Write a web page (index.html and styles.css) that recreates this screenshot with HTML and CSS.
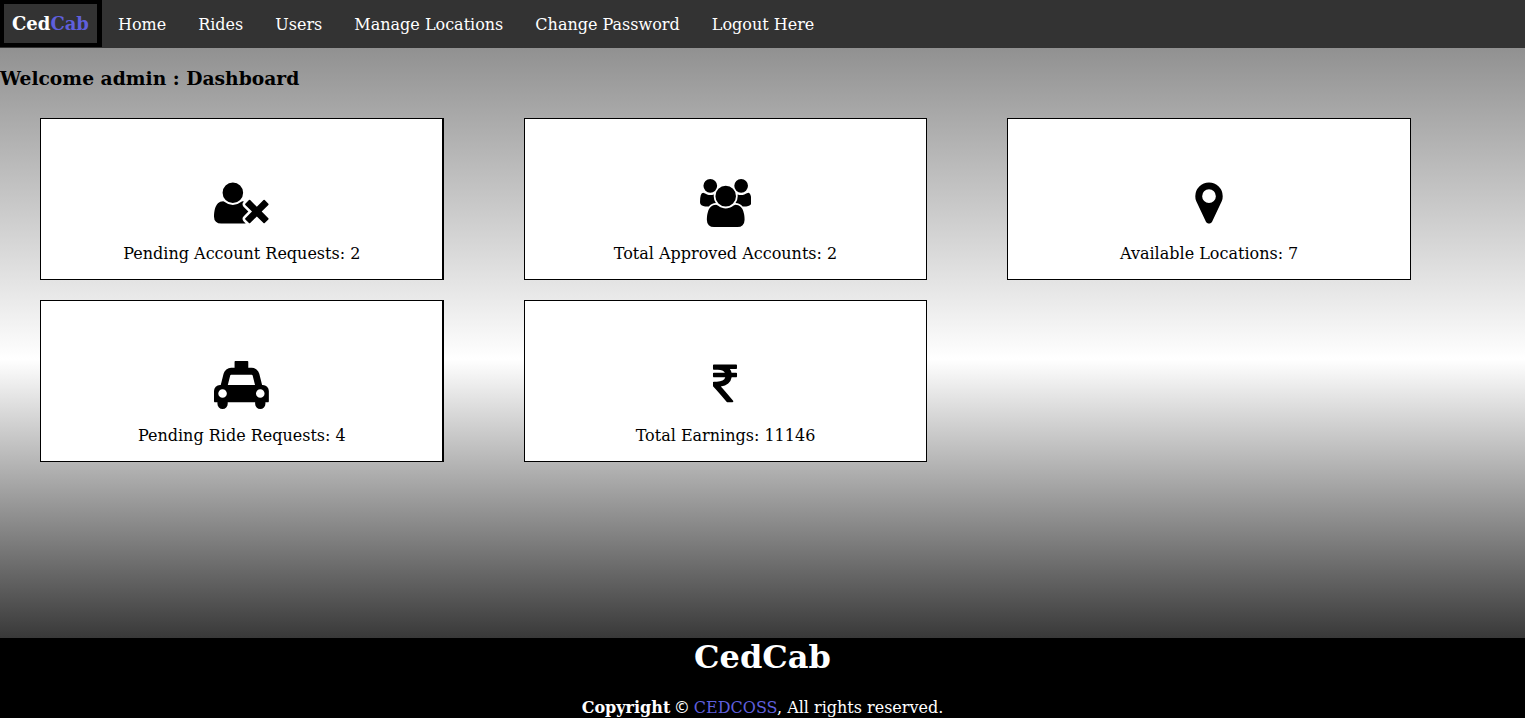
FILE: index.html
```html
<!DOCTYPE html>
<html lang="en">
<head>
<meta charset="utf-8">
<title>CedCab Dashboard</title>
<link rel="stylesheet" href="styles.css">
</head>
<body>
<header class="navbar">
  <a class="logo" href="#">Ced<span class="accent">Cab</span></a>
  <nav class="links">
    <a href="#">Home</a>
    <a href="#">Rides</a>
    <a href="#">Users</a>
    <a href="#">Manage Locations</a>
    <a href="#">Change Password</a>
    <a href="#">Logout Here</a>
  </nav>
</header>
<main class="content">
  <h3 class="welcome">Welcome admin : Dashboard</h3>
  <div class="cards">
    <section class="card">
      <svg class="icon" viewBox="0 0 2048 1792" aria-hidden="true"><path d="M704 896q-159 0-271.500-112.500t-112.500-271.500 112.500-271.500 271.500-112.500 271.500 112.500 112.500 271.500-112.500 271.500-271.500 112.500zm1077 320l249 249q9 9 9 23 0 13-9 22l-136 136q-9 9-22 9-14 0-23-9l-249-249-249 249q-9 9-23 9-13 0-22-9l-136-136q-9-9-9-22 0-14 9-23l249-249-249-249q-9-9-9-23 0-13 9-22l136-136q9-9 22-9 14 0 23 9l249 249 249-249q9-9 23-9 13 0 22 9l136 136q9 9 9 22 0 14-9 23zm-498 0l-181 181q-37 37-37 91 0 53 37 90l83 83q-21 3-44 3h-874q-121 0-194-69t-73-190q0-53 3.500-103.500t14-109 26.500-108.500 43-97.500 62-81 85.500-53.500 111.500-20q19 0 39 17 154 122 319 122t319-122q20-17 39-17 28 0 57 6-28 27-41 50t-13 56q0 54 37 91z"/></svg>
      <p class="stat">Pending Account Requests: 2</p>
    </section>
    <section class="card">
      <svg class="icon" viewBox="0 0 1920 1792" aria-hidden="true"><path d="M593 896q-162 5-265 128h-134q-82 0-138-40.500t-56-118.500q0-353 124-353 6 0 43.500 21t97.500 42.500 119 21.500q67 0 133-23-5 37-5 66 0 139 81 256zm1071 637q0 120-73 189.500t-194 69.500h-874q-121 0-194-69.500t-73-189.500q0-53 3.500-103.500t14-109 26.500-108.500 43-97.500 62-81 85.500-53.500 111.500-20q10 0 43 21.500t73 48 107 48 135 21.500 135-21.500 107-48 73-48 43-21.500q61 0 111.500 20t85.500 53.500 62 81 43 97.500 26.500 108.500 14 109 3.500 103.500zm-1024-1277q0 106-75 181t-181 75-181-75-75-181 75-181 181-75 181 75 75 181zm704 384q0 159-112.500 271.500t-271.500 112.500-271.500-112.500-112.500-271.500 112.500-271.500 271.500-112.500 271.500 112.500 112.500 271.500zm576 225q0 78-56 118.500t-138 40.500h-134q-103-123-265-128 81-117 81-256 0-29-5-66 66 23 133 23 59 0 119-21.500t97.500-42.500 43.500-21q124 0 124 353zm-128-609q0 106-75 181t-181 75-181-75-75-181 75-181 181-75 181 75 75 181z"/></svg>
      <p class="stat">Total Approved Accounts: 2</p>
    </section>
    <section class="card">
      <svg class="icon" viewBox="0 0 1792 1792" aria-hidden="true"><path d="M1152 640q0-106-75-181t-181-75-181 75-75 181 75 181 181 75 181-75 75-181zm256 0q0 109-33 179l-364 774q-16 33-47.500 52t-67.500 19-67.500-19-46.500-52l-365-774q-33-70-33-179 0-212 150-362t362-150 362 150 150 362z"/></svg>
      <p class="stat">Available Locations: 7</p>
    </section>
    <section class="card">
      <svg class="icon" viewBox="0 -128 2048 1792" aria-hidden="true"><path d="M480 1088q0-66-47-113t-113-47-113 47-47 113 47 113 113 47 113-47 47-113zm36-320h1016l-89-357q-2-8-14-17.500t-21-9.500h-768q-9 0-21 9.500t-14 17.500zm1372 320q0-66-47-113t-113-47-113 47-47 113 47 113 113 47 113-47 47-113zm160-96v384q0 14-9 23t-23 9h-96v64q0 80-56 136t-136 56-136-56-56-136v-64h-1024v64q0 80-56 136t-136 56-136-56-56-136v-64h-96q-14 0-23-9t-9-23v-384q0-93 65.500-158.500t158.500-65.500h28l105-419q23-94 104-157.500t179-63.500h128v-224q0-14 9-23t23-9h448q14 0 23 9t9 23v224h128q98 0 179 63.500t104 157.500l105 419h28q93 0 158.500 65.500t65.500 158.500z"/></svg>
      <p class="stat">Pending Ride Requests: 4</p>
    </section>
    <section class="card">
      <svg class="icon" viewBox="0 0 1792 1792" aria-hidden="true"><path d="M1345 470v102q0 14-9 23t-23 9h-168q-23 144-129 234t-276 110q167 178 459 536 14 16 4 34-8 18-29 18h-195q-16 0-25-12-306-367-498-571-9-9-9-22v-127q0-13 9.500-22.500t22.500-9.500h112q132 0 212.500-43t102.500-125h-427q-14 0-23-9t-9-23v-102q0-14 9-23t23-9h413q-57-113-268-113h-145q-13 0-22.500-9.500t-9.500-22.500v-133q0-14 9-23t23-9h832q14 0 23 9t9 23v102q0 14-9 23t-23 9h-233q47 61 64 144h171q14 0 23 9t9 23z"/></svg>
      <p class="stat">Total Earnings: 11146</p>
    </section>
  </div>
</main>
<footer class="footer">
  <h1 class="brand">CedCab</h1>
  <p class="legal"><b>Copyright</b> <span class="copyright">©</span> <a class="accent" href="#">CEDCOSS</a>, All rights reserved.</p>
</footer>
</body>
</html>
```
FILE: styles.css
```css
* { box-sizing: border-box; }

html { background: white; }

body {
  display: flex;
  flex-direction: column;
  min-height: calc(100vh - 2px);
  margin: 0;
  background: linear-gradient(gray, white, black);
  color: black;
  font: 16px/19px "DejaVu Serif", serif;
}

a { color: inherit; text-decoration: none; }

.accent { color: #5f5fdc; }

.navbar {
  display: flex;
  align-items: flex-start;
  min-height: 48px;
  background: #333;
  color: white;
}

.logo {
  padding: 8px;
  border: 4px solid black;
  border-right-width: 5px;
  font-size: 18px;
  font-weight: bold;
  line-height: 23px;
}

.links { display: flex; flex-wrap: wrap; }
.links a { padding: 15px 16px 13px; line-height: 20px; }

.content { flex: 1; }

.welcome {
  margin: 19px 0 28px;
  line-height: 23px;
}

.cards {
  display: grid;
  grid-template-columns: repeat(3, 1fr);
  gap: 20px 80px;
  padding: 0 114px 20px 40px;
}

.card {
  padding: 60px 16px 16px;
  border: 1px solid black;
  background: white;
  text-align: center;
}

.card:nth-child(3n + 1) {
  padding-right: 15px;
  border-right-width: 2px;
}

.icon {
  display: block;
  height: 48px;
  margin: 0 auto 17px;
}

.stat { margin: 0; }

.footer {
  background: black;
  color: white;
  text-align: center;
}

.brand {
  margin: 0 0 22px;
  font-size: 32px;
  line-height: 38px;
}

.legal { margin: 0; line-height: 20px; }

.copyright {
  font-family: "Noto Sans", sans-serif;
  line-height: 1;
}
```
